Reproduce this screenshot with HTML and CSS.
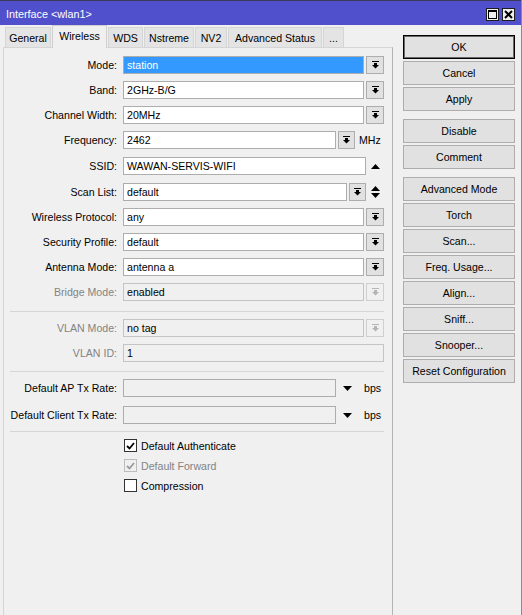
FILE: index.html
```html
<!DOCTYPE html>
<html>
<head>
<meta charset="utf-8">
<link rel="stylesheet" href="styles.css">
</head>
<body>
<div class="window">
  <div class="titlebar">
    <span class="title">Interface &lt;wlan1&gt;</span>
    <div class="tbtns">
      <span class="tbtn"><svg width="11" height="11" viewBox="0 0 11 11"><rect x="1.5" y="1.5" width="8" height="8" fill="none" stroke="#000" stroke-width="1"/><rect x="1" y="1" width="9" height="2" fill="#000"/></svg></span>
      <span class="tbtn"><svg width="11" height="11" viewBox="0 0 11 11"><path d="M2 2L9 9M9 2L2 9" stroke="#000" stroke-width="2"/></svg></span>
    </div>
  </div>
  <div class="content">
    <div class="left">
      <div class="tabs">
        <span class="tab t-general">General</span>
        <span class="tab active t-wireless">Wireless</span>
        <span class="tab t-wds">WDS</span>
        <span class="tab t-nstreme">Nstreme</span>
        <span class="tab t-nv2">NV2</span>
        <span class="tab t-adv">Advanced Status</span>
        <span class="tab t-more">...</span>
      </div>
      <div class="panel">
        <div class="row">
          <span class="lbl">Mode:</span>
          <span class="input w-main selected">station</span>
          <span class="ddbtn"><svg class="dd" width="7" height="8" viewBox="0 0 7 8"><rect x="0" y="0" width="7" height="1"/><rect x="2" y="2" width="3" height="2"/><path d="M0 4H7L3.5 7.5Z"/></svg></span>
        </div>
        <div class="row">
          <span class="lbl">Band:</span>
          <span class="input w-main">2GHz-B/G</span>
          <span class="ddbtn"><svg class="dd" width="7" height="8" viewBox="0 0 7 8"><rect x="0" y="0" width="7" height="1"/><rect x="2" y="2" width="3" height="2"/><path d="M0 4H7L3.5 7.5Z"/></svg></span>
        </div>
        <div class="row">
          <span class="lbl">Channel Width:</span>
          <span class="input w-main">20MHz</span>
          <span class="ddbtn"><svg class="dd" width="7" height="8" viewBox="0 0 7 8"><rect x="0" y="0" width="7" height="1"/><rect x="2" y="2" width="3" height="2"/><path d="M0 4H7L3.5 7.5Z"/></svg></span>
        </div>
        <div class="row">
          <span class="lbl">Frequency:</span>
          <span class="input w-freq">2462</span>
          <span class="ddbtn narrow"><svg class="dd" width="7" height="8" viewBox="0 0 7 8"><rect x="0" y="0" width="7" height="1"/><rect x="2" y="2" width="3" height="2"/><path d="M0 4H7L3.5 7.5Z"/></svg></span>
          <span class="unit mhz">MHz</span>
        </div>
        <div class="row nudge">
          <span class="lbl">SSID:</span>
          <span class="input w-ssid">WAWAN-SERVIS-WIFI</span>
          <svg class="tri" width="9" height="5" viewBox="0 0 9 5"><path d="M0 5H9L4.5 0Z"/></svg>
        </div>
        <div class="row nudge">
          <span class="lbl">Scan List:</span>
          <span class="input w-scan">default</span>
          <span class="ddbtn narrow"><svg class="dd" width="7" height="8" viewBox="0 0 7 8"><rect x="0" y="0" width="7" height="1"/><rect x="2" y="2" width="3" height="2"/><path d="M0 4H7L3.5 7.5Z"/></svg></span>
          <svg class="tri" width="9" height="12" viewBox="0 0 9 12"><path d="M0 5H9L4.5 0Z"/><path d="M0 7H9L4.5 12Z"/></svg>
        </div>
        <div class="row">
          <span class="lbl">Wireless Protocol:</span>
          <span class="input w-main">any</span>
          <span class="ddbtn"><svg class="dd" width="7" height="8" viewBox="0 0 7 8"><rect x="0" y="0" width="7" height="1"/><rect x="2" y="2" width="3" height="2"/><path d="M0 4H7L3.5 7.5Z"/></svg></span>
        </div>
        <div class="row">
          <span class="lbl">Security Profile:</span>
          <span class="input w-main">default</span>
          <span class="ddbtn"><svg class="dd" width="7" height="8" viewBox="0 0 7 8"><rect x="0" y="0" width="7" height="1"/><rect x="2" y="2" width="3" height="2"/><path d="M0 4H7L3.5 7.5Z"/></svg></span>
        </div>
        <div class="row">
          <span class="lbl">Antenna Mode:</span>
          <span class="input w-main">antenna a</span>
          <span class="ddbtn"><svg class="dd" width="7" height="8" viewBox="0 0 7 8"><rect x="0" y="0" width="7" height="1"/><rect x="2" y="2" width="3" height="2"/><path d="M0 4H7L3.5 7.5Z"/></svg></span>
        </div>
        <div class="row disabled">
          <span class="lbl">Bridge Mode:</span>
          <span class="input w-main">enabled</span>
          <span class="ddbtn"><svg class="dd" width="7" height="8" viewBox="0 0 7 8"><rect x="0" y="0" width="7" height="1"/><rect x="2" y="2" width="3" height="2"/><path d="M0 4H7L3.5 7.5Z"/></svg></span>
        </div>

        <div class="sep"></div>

        <div class="row disabled first-after-sep">
          <span class="lbl">VLAN Mode:</span>
          <span class="input w-main">no tag</span>
          <span class="ddbtn"><svg class="dd" width="7" height="8" viewBox="0 0 7 8"><rect x="0" y="0" width="7" height="1"/><rect x="2" y="2" width="3" height="2"/><path d="M0 4H7L3.5 7.5Z"/></svg></span>
        </div>
        <div class="row disabled nudge">
          <span class="lbl">VLAN ID:</span>
          <span class="input w-full">1</span>
        </div>

        <div class="sep sep-mid"></div>

        <div class="row first-after-sep">
          <span class="lbl">Default AP Tx Rate:</span>
          <span class="input w-rate empty"></span>
          <svg class="tri rate" width="9" height="5" viewBox="0 0 9 5"><path d="M0 0H9L4.5 5Z"/></svg>
          <span class="unit bps">bps</span>
        </div>
        <div class="row client">
          <span class="lbl">Default Client Tx Rate:</span>
          <span class="input w-rate empty"></span>
          <svg class="tri rate" width="9" height="5" viewBox="0 0 9 5"><path d="M0 0H9L4.5 5Z"/></svg>
          <span class="unit bps">bps</span>
        </div>

        <div class="sep sep-last"></div>

        <div class="check first">
          <span class="box"><svg width="9" height="8" viewBox="0 0 9 8"><path d="M1 4L3.5 6.5L8 1" fill="none" stroke="#000" stroke-width="1.8"/></svg></span>
          <span class="clabel">Default Authenticate</span>
        </div>
        <div class="check disabled">
          <span class="box"><svg width="9" height="8" viewBox="0 0 9 8"><path d="M1 4L3.5 6.5L8 1" fill="none" stroke="#9a9a9a" stroke-width="1.8"/></svg></span>
          <span class="clabel">Default Forward</span>
        </div>
        <div class="check">
          <span class="box"></span>
          <span class="clabel">Compression</span>
        </div>
      </div>
    </div>
    <div class="right">
      <div class="bgroup">
        <span class="btn default">OK</span>
        <span class="btn">Cancel</span>
        <span class="btn">Apply</span>
      </div>
      <div class="bgroup">
        <span class="btn">Disable</span>
        <span class="btn">Comment</span>
      </div>
      <div class="bgroup">
        <span class="btn">Advanced Mode</span>
        <span class="btn">Torch</span>
        <span class="btn">Scan...</span>
        <span class="btn">Freq. Usage...</span>
        <span class="btn">Align...</span>
        <span class="btn">Sniff...</span>
        <span class="btn">Snooper...</span>
        <span class="btn">Reset Configuration</span>
      </div>
    </div>
  </div>
</div>
</body>
</html>
```

FILE: styles.css
```css
* { box-sizing: border-box; }
html, body { margin: 0; padding: 0; }
body {
  background: #f0f0f0;
  font-family: "Liberation Sans", Arial, sans-serif;
  font-size: 10.6px;
  color: #000;
}
.window {
  width: 522px;
  height: 615px;
  display: flex;
  flex-direction: column;
  background: #f0f0f0;
  border-right: 1px solid #8c8c8c;
  overflow: hidden;
}
.titlebar {
  height: 25px;
  flex: none;
  background: #5050cc;
  border-top: 1px solid #3a3a5a;
  display: flex;
  align-items: center;
  justify-content: space-between;
  padding: 0 6px 0 6px;
}
.title {
  color: #fff;
  font-size: 10.8px;
  margin-top: 2px;
}
.tbtns {
  display: flex;
  gap: 3px;
  margin-top: 3px;
}
.tbtn {
  width: 13px;
  height: 13px;
  background: #f0f0f0;
  border: 1px solid #1e1e1e;
  display: flex;
  align-items: center;
  justify-content: center;
}
.content {
  flex: 1;
  display: flex;
}
.left {
  width: 390px;
  margin-left: 3px;
  display: flex;
  flex-direction: column;
}
.tabs {
  height: 22px;
  display: flex;
  align-items: flex-end;
  padding-left: 2px;
  position: relative;
  z-index: 1;
}
.tab {
  height: 20px;
  background: #e4e4e4;
  border: 1px solid #d5d5d5;
  border-bottom: none;
  display: flex;
  align-items: center;
  justify-content: center;
  margin-right: 1px;
  padding-top: 1px;
}
.tab.active {
  height: 23px;
  margin-bottom: -1px;
  background: #f0f0f0;
  border-color: #cfcfcf;
  padding-top: 0;
  padding-bottom: 3px;
}
.t-general { width: 46px; }
.t-wireless { width: 55px; }
.t-wds { width: 35px; }
.t-nstreme { width: 50px; }
.t-nv2 { width: 32px; }
.t-adv { width: 94px; }
.t-more { width: 21px; }
.panel {
  flex: 1;
  display: flex;
  flex-direction: column;
  border: 1px solid #d5d5d5;
  border-right-color: #b4b4b4;
  border-bottom: none;
  background: #f0f0f0;
  padding-top: 8px;
}
.row {
  height: 18px;
  flex: none;
  display: flex;
  align-items: center;
  margin-bottom: 7px;
}
.row.nudge { margin-top: 1px; }
.lbl {
  width: 113px;
  text-align: right;
  margin-right: 6px;
  white-space: nowrap;
}
.input {
  height: 18px;
  border: 1px solid #adadad;
  background: #fff;
  padding-left: 3px;
  display: flex;
  align-items: center;
  white-space: nowrap;
}
.input.selected {
  background: #3399ff;
  color: #fff;
}
.input.empty { background: #f0f0f0; }
.w-main { width: 241px; }
.w-freq { width: 213px; }
.w-ssid { width: 243px; }
.w-scan { width: 224px; }
.w-rate { width: 213px; }
.w-full { width: 261px; }
.ddbtn {
  width: 18px;
  height: 18px;
  margin-left: 2px;
  background: #e1e1e1;
  border: 1px solid #adadad;
  display: flex;
  align-items: center;
  justify-content: center;
}
.ddbtn.narrow { width: 17px; }
.dd { fill: #000; }
.tri { fill: #000; margin-left: 5px; }
.tri.rate { margin-left: 7px; }
.unit.mhz { margin-left: 4px; }
.unit.bps { margin-left: 12px; }
.row.disabled .lbl { color: #838383; }
.row.disabled .input { background: #f0f0f0; border-color: #c4c4c4; }
.row.disabled .ddbtn { background: #f0f0f0; border-color: #cfcfcf; }
.row.disabled .dd { fill: #b5b5b5; }
.sep {
  height: 1px;
  flex: none;
  background: #d6d6d6;
  margin: 3px 8px 0 6px;
}
.sep-mid { margin-top: 2px; }
.sep-last { margin-top: 0; }
.row.first-after-sep { margin-top: 7px; margin-bottom: 6px; }
.row.client { margin-top: 3px; margin-bottom: 7px; }
.check {
  display: flex;
  flex: none;
  align-items: center;
  height: 13px;
  margin-left: 120px;
  margin-bottom: 7px;
}
.check.first { margin-top: 7px; }
.box {
  width: 13px;
  height: 13px;
  border: 1px solid #333;
  background: #fff;
  margin-right: 4px;
  display: flex;
  align-items: center;
  justify-content: center;
}
.check.disabled .box { border-color: #bcbcbc; background: #f0f0f0; }
.check.disabled .clabel { color: #838383; }
.right {
  flex: 1;
  padding: 10px 0 0 10px;
  display: flex;
  flex-direction: column;
  gap: 8px;
}
.bgroup {
  display: flex;
  flex-direction: column;
  gap: 2px;
}
.btn {
  width: 112px;
  height: 24px;
  background: #e1e1e1;
  border: 1px solid #adadad;
  display: flex;
  align-items: center;
  justify-content: center;
  white-space: nowrap;
}
.btn.default {
  border: 1px solid #000;
  box-shadow: inset 0 0 0 1px #6a6a6a;
}
```
